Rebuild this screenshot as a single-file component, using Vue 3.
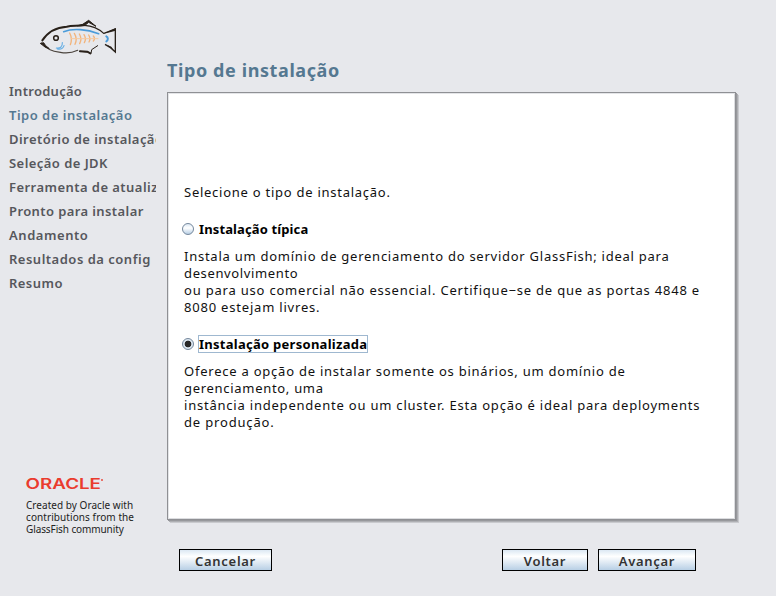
<script setup>
import { ref } from 'vue'

const steps = [
  { label: 'Introdução', cls: 's-intro' },
  { label: 'Tipo de instalação', cls: 's-type' },
  { label: 'Diretório de instalação', cls: 's-dir' },
  { label: 'Seleção de JDK', cls: 's-jdk' },
  { label: 'Ferramenta de atualização', cls: 's-tool' },
  { label: 'Pronto para instalar', cls: 's-ready' },
  { label: 'Andamento', cls: 's-progress' },
  { label: 'Resultados da config', cls: 's-results' },
  { label: 'Resumo', cls: 's-summary' },
]
const current = 1
const choice = ref('custom')
const options = [
  {
    id: 'typical',
    label: 'Instalação típica',
    lines: [
      'Instala um domínio de gerenciamento do servidor GlassFish; ideal para',
      'desenvolvimento',
      'ou para uso comercial não essencial. Certifique−se de que as portas 4848 e',
      '8080 estejam livres.',
    ],
  },
  {
    id: 'custom',
    label: 'Instalação personalizada',
    lines: [
      'Oferece a opção de instalar somente os binários, um domínio de',
      'gerenciamento, uma',
      'instância independente ou um cluster. Esta opção é ideal para deployments',
      'de produção.',
    ],
  },
]
</script>

<template>
  <div class="installer">
    <aside class="side">
      <svg class="fish" viewBox="0 0 300 165" fill="none" stroke-linecap="round">
        <path d="M37 91 C52 68 78 52 110 50 C128 46 145 49 163 45" stroke="#29211a" stroke-width="6" />
        <path d="M143 47 L158 43 L176 31 L198 49 L176 37 L165 46 Z" fill="#29211a" stroke="#29211a" stroke-width="3" />
        <path d="M163 46 C184 47 205 55 221 70" stroke="#29211a" stroke-width="3.5" />
        <path d="M35 99 C46 115 65 124 91 127 C112 131 130 127 143 121" stroke="#4b443e" stroke-width="3.5" />
        <path d="M32 100 L41 98 L47 107 L58 116 L47 112 Z" fill="#29211a" stroke="#29211a" stroke-width="3" />
        <path d="M150 124 L174 126 L183 131 L185 119 L203 107" stroke="#29211a" stroke-width="3" stroke-linejoin="miter" />
        <path d="M150 124 L172 125 L181 130" stroke="#29211a" stroke-width="6" />
        <path d="M222 70 L256 57 L256 126 L240 112 L225 103" stroke="#29211a" stroke-width="4" stroke-linecap="butt" />
        <path d="M223 70 L257 54 L257 62 L240 67 Z M231 104 L257 128 L244 110 Z" fill="#29211a" />
        <path d="M101 65 C129 54 171 58 206 71" stroke="#4b9cda" stroke-width="5" />
        <path d="M97 98 C98 111 90 116 79 114 M82 117 C91 119 99 115 102 107" stroke="#65aee4" stroke-width="3.5" />
        <path d="M229 79 C235 82 235 91 229 94" stroke="#4b9cda" stroke-width="6" />
        <path d="M119 69 Q128 86 121 104 M133 70 Q143 86 135 103 M148 72 Q157 86 149 101 M162 74 Q170 86 163 98 M176 75 Q183 86 177 96 M190 78 Q197 86 190 93" stroke="#f2b47c" stroke-width="4" />
        <path d="M124 86 H204" stroke="#f7c99e" stroke-width="3" />
        <circle cx="78" cy="84" r="7" stroke="#29211a" stroke-width="4.5" />
      </svg>
      <nav class="steps">
        <div v-for="(s, i) in steps" :key="s.label" class="step" :class="[s.cls, { current: i === current }]">{{ s.label }}</div>
      </nav>
      <footer class="credit">
        <svg class="oracle" viewBox="0 0 80 14">
          <text x="-0.5" y="12" textLength="75.5" lengthAdjust="spacingAndGlyphs">ORACLE</text>
          <circle cx="76" cy="3" r="0.9" />
        </svg>
        <div class="credit-text">
          <div class="c0">Created by Oracle with</div>
          <div class="c1">contributions from the</div>
          <div class="c2">GlassFish community</div>
        </div>
      </footer>
    </aside>

    <main class="main">
      <h1>Tipo de instalação</h1>
      <section class="panel">
        <p class="lead">Selecione o tipo de instalação.</p>
        <div v-for="o in options" :key="o.id" class="option" :class="o.id">
          <div class="choice" @click="choice = o.id">
            <span class="radio" :class="{ on: choice === o.id }"></span>
            <span class="label" :class="{ focus: choice === o.id }">{{ o.label }}</span>
          </div>
          <div class="desc">
            <div v-for="(l, i) in o.lines" :key="l" :class="'l' + i">{{ l }}</div>
          </div>
        </div>
      </section>
      <div class="actions">
        <button class="cancel">Cancelar</button>
        <button class="back">Voltar</button>
        <button class="next">Avançar</button>
      </div>
    </main>
  </div>
</template>

<style>
body { margin: 0; background: #e7e8ec; overflow: hidden; }
</style>

<style scoped>
.installer {
  box-sizing: border-box;
  width: 776px;
  height: 596px;
  display: grid;
  grid-template-columns: 156px 570px;
  column-gap: 11px;
  background: #e7e8ec;
  font-family: "Noto Sans", "Open Sans", sans-serif;
  font-size: 13px;
}
.side { display: flex; flex-direction: column; overflow: hidden; height: 596px; }
.fish { width: 100px; height: 55px; margin: 10px 0 0 30px; flex: none; }
.steps { margin-top: 14px; padding-left: 9px; }
.step {
  height: 24px;
  line-height: 24px;
  font-weight: 600;
  color: #56575c;
  white-space: nowrap;
  letter-spacing: 0.45px;
}
.step.current { color: #557891; letter-spacing: 0.5px; }
.s-intro { letter-spacing: 0.28px; }
.s-ready { letter-spacing: 0.4px; }
.s-progress { letter-spacing: 0.55px; }
.s-results { letter-spacing: 0.5px; }
.credit { margin: 182px 0 0 26px; }
.oracle { display: block; width: 80px; height: 14px; fill: #ea3b2e; overflow: visible; }
.oracle text { font: 600 14px "Inter", sans-serif; }
.credit-text { margin-top: 8px; font-size: 10px; line-height: 12px; color: #222; white-space: nowrap; }
.c0 { letter-spacing: 0.04px; }
.c1 { letter-spacing: 0.08px; }
.c2 { letter-spacing: -0.1px; }
.main { display: flex; flex-direction: column; }
h1 {
  margin: 58px 0 0;
  height: 34px;
  line-height: 25px;
  font-size: 18px;
  font-weight: 700;
  color: #557891;
  letter-spacing: 0.6px;
  white-space: nowrap;
}
.panel {
  box-sizing: border-box;
  width: 569px;
  height: 428px;
  padding: 91px 15px 0 14px;
  background: #fff;
  border: 1px solid #8f9094;
  box-shadow: inset 1px 1px #e4e5e8, inset -1px -1px #dcdde0, 1px 1px #97989c, 2px 2px #aeafb3, 3px 3px #c9cace;
  color: #111;
}
.lead { margin: 0 0 0 2px; line-height: 17px; letter-spacing: 0.74px; white-space: nowrap; }
.option { margin-top: 18px; }
.choice { display: flex; align-items: center; height: 20px; }
.radio {
  box-sizing: border-box;
  width: 12px;
  height: 12px;
  border: 1px solid #74879c;
  border-radius: 50%;
  background: linear-gradient(#dce8f3, #fff 40%, #b8cfe5);
}
.radio.on { background: radial-gradient(circle, #282828 0 3px, #dce7f1 3.7px); }
.label {
  box-sizing: border-box;
  margin-left: 4px;
  height: 18px;
  border: 1px solid transparent;
  line-height: 16px;
  font-weight: 700;
  color: #000;
  white-space: nowrap;
}
.typical .label { letter-spacing: 0.12px; }
.custom .label { letter-spacing: 0.27px; }
.label.focus { border-color: #9fb8d0; }
.desc { margin: 9px 0 0 2px; line-height: 17px; letter-spacing: 0.7px; white-space: nowrap; }
.typical .l0 { letter-spacing: 0.745px; }
.typical .l1 { letter-spacing: 0.63px; }
.typical .l2 { letter-spacing: 0.795px; }
.typical .l3 { letter-spacing: 0.8px; }
.custom .l0 { letter-spacing: 0.765px; }
.custom .l2 { letter-spacing: 0.785px; }
.custom .l3 { letter-spacing: 0.83px; }
.actions { display: flex; margin: 29px 0 0 12px; }
button {
  box-sizing: border-box;
  height: 22px;
  padding: 1px 0 0;
  border: 1px solid #000;
  background: linear-gradient(#dce8f3, #fff 32%, #b8cfe5);
  font: 600 13px/18px "Noto Sans", sans-serif;
  letter-spacing: 0.7px;
  color: #333;
}
.cancel { width: 93px; }
.back { width: 86px; margin-left: 230px; }
.next { width: 98px; margin-left: 10px; }
</style>
